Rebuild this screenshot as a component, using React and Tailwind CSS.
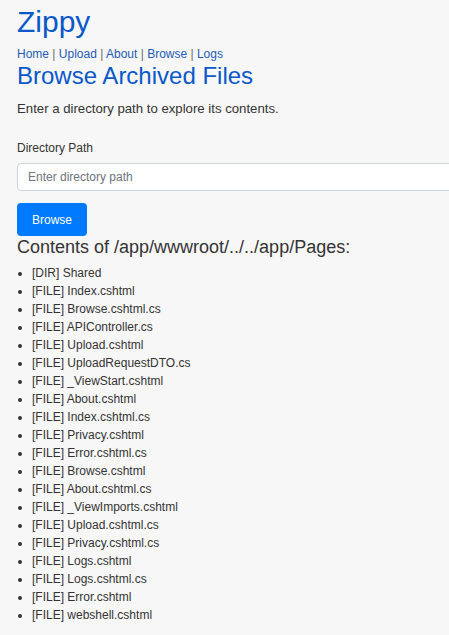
import React, { useState } from 'react';

const entries = [
  '[DIR] Shared',
  '[FILE] Index.cshtml',
  '[FILE] Browse.cshtml.cs',
  '[FILE] APIController.cs',
  '[FILE] Upload.cshtml',
  '[FILE] UploadRequestDTO.cs',
  '[FILE] _ViewStart.cshtml',
  '[FILE] About.cshtml',
  '[FILE] Index.cshtml.cs',
  '[FILE] Privacy.cshtml',
  '[FILE] Error.cshtml.cs',
  '[FILE] Browse.cshtml',
  '[FILE] About.cshtml.cs',
  '[FILE] _ViewImports.cshtml',
  '[FILE] Upload.cshtml.cs',
  '[FILE] Privacy.cshtml.cs',
  '[FILE] Logs.cshtml',
  '[FILE] Logs.cshtml.cs',
  '[FILE] Error.cshtml',
  '[FILE] webshell.cshtml'
];

const links = ['Home', 'Upload', 'About', 'Browse', 'Logs'];

export default function App() {
  const [path, setPath] = useState('');

  return (
    <div
      className="min-h-screen bg-[#f7f7f7] pl-[17px] text-[#333] overflow-hidden"
      style={{ fontFamily: '"Liberation Sans", Arial, sans-serif' }}
    >
      <h1 className="text-[30px] leading-[40px] text-[#0a58ca] pt-[2px]">Zippy</h1>

      {/* top navigation */}
      <nav className="text-[12px] leading-[16px] mt-[4px]">
        {links.map((l, i) => (
          <span key={l}>
            <a href="#" className="text-[#1d5bb8]">{l}</a>
            {i < links.length - 1 && <span className="text-[#6b6b6b]"> | </span>}
          </span>
        ))}
      </nav>

      <h2 className="text-[24px] leading-[28px] text-[#0a58ca]">Browse Archived Files</h2>
      <p className="text-[13.2px] leading-[18px] mt-[10px]">Enter a directory path to explore its contents.</p>

      <form className="mt-[22px]" onSubmit={(e) => e.preventDefault()}>
        <label className="block text-[12px] leading-[16px]">Directory Path</label>
        <input
          value={path}
          onChange={(e) => setPath(e.target.value)}
          placeholder="Enter directory path"
          className="block mt-[7px] w-[460px] h-[28px] px-[10px] bg-white border border-[#ced4da] rounded-[4px] text-[12px] placeholder:text-[#6c757d] outline-none"
        />
        <button
          type="submit"
          className="mt-[12px] w-[70px] h-[33px] bg-[#007bff] text-white text-[12px] rounded-[4px]"
        >
          Browse
        </button>
      </form>

      <h3 className="text-[18px] leading-[22px]">Contents of /app/wwwroot/../../app/Pages:</h3>

      <ul className="list-disc pl-[15px] mt-[6px] text-[12px] leading-[18px]">
        {entries.map((e) => (
          <li key={e}>{e}</li>
        ))}
      </ul>
    </div>
  );
}
